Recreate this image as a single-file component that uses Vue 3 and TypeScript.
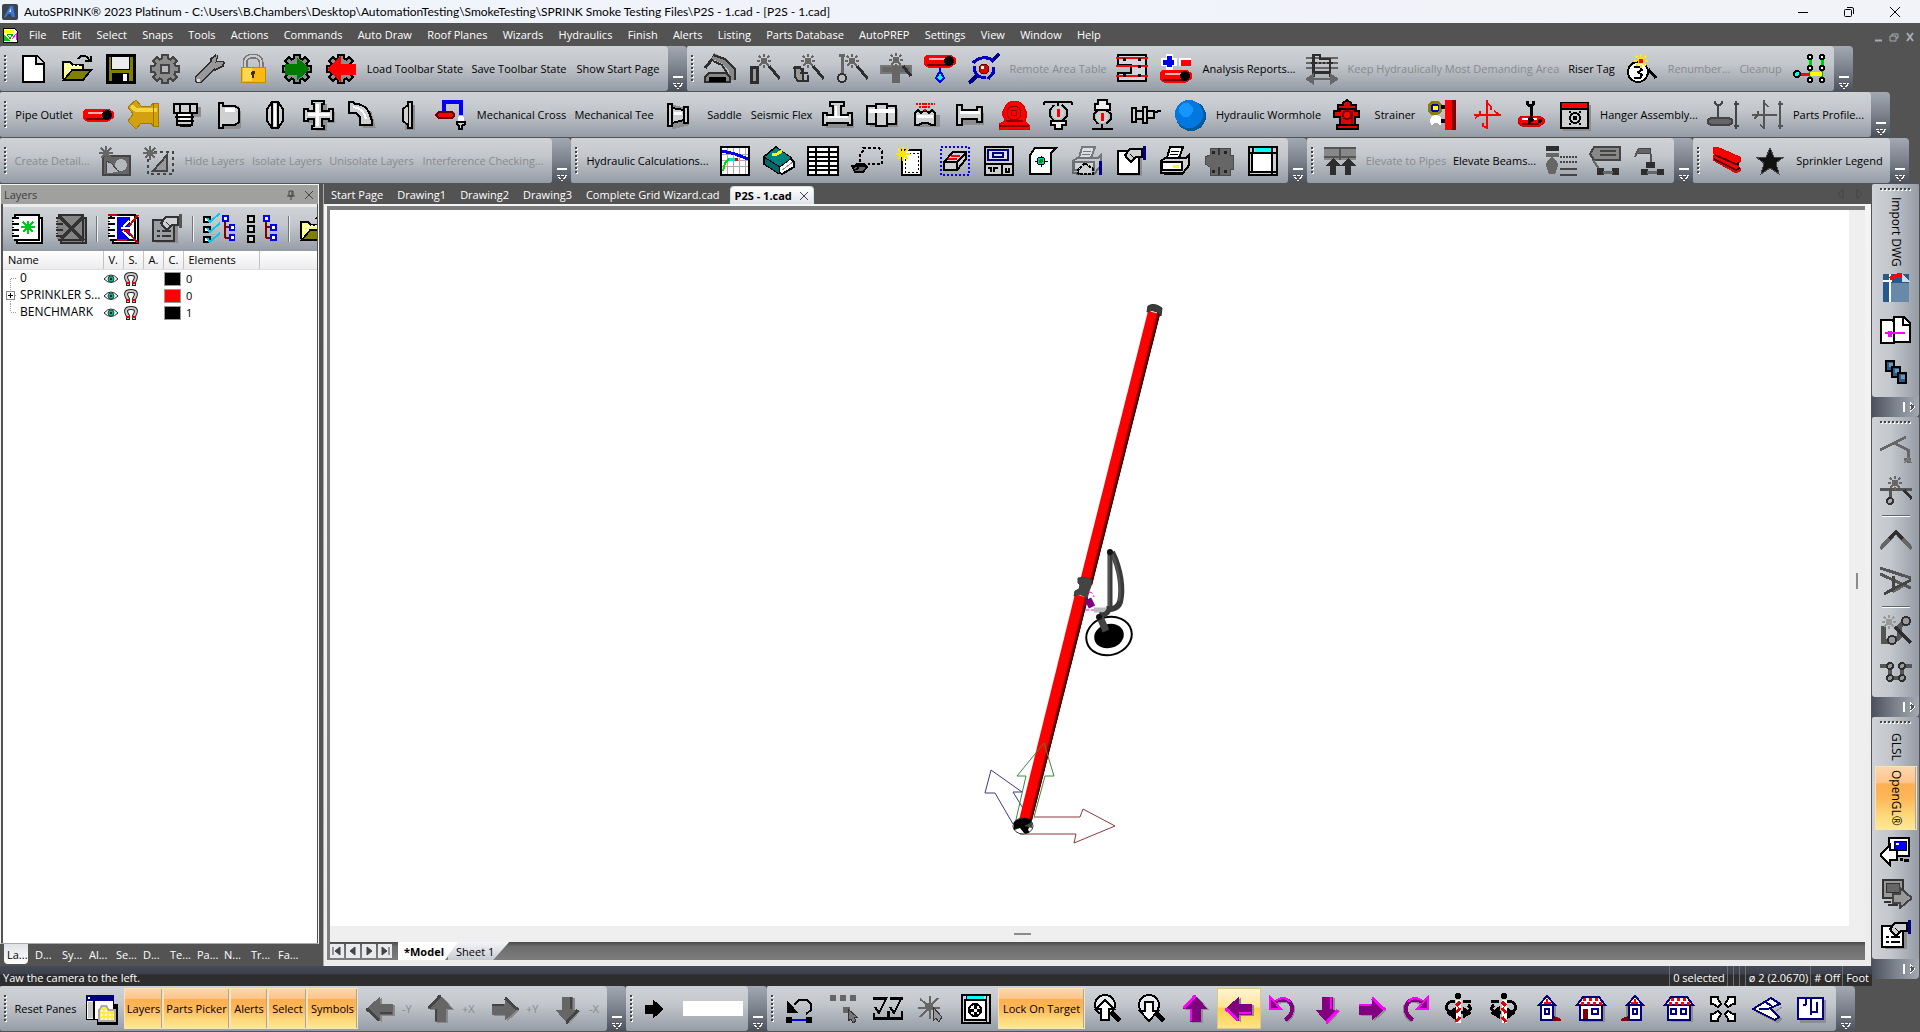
<script setup lang="ts">
interface Item {
  i?: string
  t?: string
  w?: number
  off?: boolean
  on?: boolean
  hot?: boolean
  sep?: boolean
  field?: boolean
}

const r = (x: number, y: number, w: number, h: number, f: string, s = 'none', sw = 2) =>
  `<rect x="${x}" y="${y}" width="${w}" height="${h}" fill="${f}" stroke="${s}" stroke-width="${sw}"/>`
const p = (d: string, f = 'none', s = '#000', sw = 2, extra = '') =>
  `<path d="${d}" fill="${f}" stroke="${s}" stroke-width="${sw}" ${extra}/>`
const c = (x: number, y: number, rad: number, f: string, s = 'none', sw = 2) =>
  `<circle cx="${x}" cy="${y}" r="${rad}" fill="${f}" stroke="${s}" stroke-width="${sw}"/>`

const K = '#000'
const G = '#666'
const D = '#2e2e2e'
const M = '#cfd0d2'
const B = '#000080'
const SH = '#8d8d8f'

const spokes = (w: number, len: number, f: string) =>
  [0, 45, 90, 135].map((a) => `<rect x="${16 - w / 2}" y="${16 - len}" width="${w}" height="${len * 2}" fill="${f}" transform="rotate(${a} 16 16)"/>`).join('')
const gear = (edge: string) => spokes(8, 15, edge) + c(16, 16, 12, edge) + spokes(4, 13, '#8c8c8c') + c(16, 16, 10, '#8c8c8c')
const spark = (x: number, y: number, f: string) =>
  p(`M${x} ${y - 7}v3M${x} ${y + 4}v3M${x - 7} ${y}h3M${x + 4} ${y}h3M${x - 5} ${y - 5}l2 2M${x + 3} ${y + 3}l2 2M${x + 5} ${y - 5}l-2 2M${x - 3} ${y + 3}l-2 2`, 'none', f, 2) + r(x - 3, y - 3, 6, 6, f)
const flare = (x: number, y: number, f: string) =>
  p(`M${x} ${y - 7}v14M${x - 7} ${y}h14M${x - 5} ${y - 5}l10 10M${x + 5} ${y - 5}l-10 10`, 'none', f, 2)
const wand = (x: number) => spark(x, 8, G) + p(`M${x + 5} 13l11 13`, 'none', D, 3)
const arrowUp = 'M16 3L27 15H21V28H11V15H5z'
const arrow = (deg: number, f: string, s: string, sh = SH) =>
  `<g transform="translate(2 1) rotate(${deg} 16 16)">${p(arrowUp, sh, sh, 1)}</g>` +
  `<g transform="rotate(${deg} 16 16)">${p(arrowUp, f, f, 1)}${p('M5 15L16 3L17 3', 'none', s, 3)}${p('M12 16V28', 'none', s, 2)}</g>`
const hook = (flip: boolean) =>
  `<g transform="${flip ? 'translate(32 0) scale(-1 1)' : ''}">` +
  p('M9 12C14 5 27 7 26 17C26 22 24 25 19 28', 'none', SH, 4) +
  p('M7 11C12 4 25 5 25 16C25 21 23 24 18 27', 'none', '#800080', 4) +
  p('M9 8C13 4 20 4 23 9', 'none', '#f0f', 2) +
  p('M3 4V16H14z', '#800080', '#f0f', 2) + '</g>'
const lens = (up: boolean) =>
  c(14, 12, 10, '#e8eaee', K, 2) + p('M21 20l8 8', 'none', K, 5) +
  (up ? p('M14 7L23 16H18V27H10V16H5z', '#fff') : p('M14 28L23 18H18V9H10V18H5z', '#fff'))
const yaw = (flip: boolean) =>
  `<g transform="${flip ? 'translate(32 0) scale(-1 1)' : ''}">` +
  c(15, 3, 3, K) + p('M15 7V30', 'none', '#fff', 5) + p('M13 13l4-4M13 20l4-5M13 29l4-5', 'none', '#e00000', 3) +
  p('M12 8H9C2 11 2 16 7 20M20 8H28M18 20C28 20 29 15 25 12', 'none', K, 3) + p('M12 15V26L4 20zM20 14V25L28 20z', K, K, 1) + '</g>'
const tower = (flip: boolean) =>
  `<g transform="${flip ? 'translate(32 0) scale(-1 1)' : ''}">` + r(12, 13, 13, 15, SH) +
  r(10, 12, 12, 15, '#fff', B) + p('M8 12L16 3L24 12z', '#fff', B) + p('M16 6v5M13 10h7', 'none', 'red', 2) +
  r(14, 16, 4, 5, '#fff', B) + p('M22 27h8l-7-3', '#800000', '#800000', 2) + '</g>'
const house = (door: boolean) =>
  r(8, 13, 22, 16, SH) + r(5, 12, 22, 15, '#fff', B) + p('M2 12L8 4H24L30 12z', '#fff', B) +
  p('M8 6H25M6 10H27', 'none', 'red', 3, 'stroke-dasharray="3 3"') +
  (door ? r(8, 16, 5, 10, '#800000') + r(17, 16, 6, 5, '#fff', B) : r(8, 16, 5, 5, '#fff', B) + r(18, 16, 5, 5, '#fff', B))
const book = (off: boolean) => {
  const k = off ? D : K
  const f = off ? '#848484' : '#fff'
  return r(6, 5, 25, 25, f, k) + r(4, 2, 24, 25, f, k) + r(2, 4, 4, 22, f) + p('M1 5h7M1 11h7M1 17h7M1 23h7', 'none', k, 2) + p('M2 8v1M2 14v1M2 20v1', 'none', k, 2)
}
const tree = (x: number) =>
  p(`M${x} 6v19M${x} 14h8M${x} 25h8`, 'none', '#800000', 2) + r(x - 2, 3, 5, 5, '#fff', '#00f') + r(x + 5, 12, 5, 5, '#fff', '#00f') + r(x + 5, 22, 5, 5, '#fff', '#00f')
const printer = p('M11 2H24L20 13H8z', '#fff') + p('M12 6h8M11 9h8', 'none', K, 1) + p('M2 16L6 13H27L30 10V20L24 28H2z', M) +
  r(3, 17, 20, 8, '#fff', K) + r(14, 20, 6, 3, '#ff0') + p('M5 29h18l6-7', 'none', K, 2)
const hand = (k: string, cuff: string) => p('M10 10L15 4H27V12H21L16 17L12 13z', M, k, 2) + p('M12 12l4 4M15 9l4 4', 'none', k, 1) + r(28, 1, 3, 14, cuff)
const pageHand = (k: string, f: string, cuff: string) => r(5, 8, 22, 22, SH) + r(2, 7, 21, 21, f, k) + p('M6 18h3M11 18h9M6 23h3M11 23h9', 'none', k, 2) + hand(k, cuff)
const pipe = (x: number, y: number, w: number) =>
  p(`M${x + 4} ${y}H${x + w - 5}L${x + w} ${y + 3}V${y + 9}L${x + w - 5} ${y + 12}H${x + 4}L${x} ${y + 9}V${y + 3}z`, 'red', 'red', 1) +
  p(`M${x + 3} ${y + 10}H${x + w - 6}`, 'none', '#700000', 2) + p(`M${x + 5} ${y + 4}H${x + w - 10}`, 'none', '#ffb0b0', 2) + c(x + w - 6, y + 6, 5, K)
const gantry = p('M0 5h32M0 10h32M0 15h32', 'none', G, 2)

const icons: Record<string, string> = {
  new: p('M6 3H20L27 10V29H6z', '#fff') + p('M19 3V11H27', '#ddd'),
  open: p('M2 26V9H9L12 12H22V16', '#ffff80') + p('M3 27L11 17H30L22 27z', '#808000') + p('M17 6C20 1 26 2 28 7', 'none', K, 2) + p('M24 8h6v-5', 'none', K, 2) + p('M4 13h16M4 17h8', 'none', '#fff', 2, 'stroke-dasharray="2 2"'),
  save: r(2, 2, 27, 27, '#808000', K, 3) + r(6, 3, 18, 13, '#e9ebee', K, 1) + r(7, 20, 17, 9, K) + r(18, 21, 4, 7, '#fff'),
  gear: gear('#444') + r(12, 12, 8, 8, '#b5b7ba', '#444'),
  wrench: p('M6 26L19 13', 'none', D, 9, 'stroke-linecap="round"') + p('M23 2L18 6V13L22 17L30 13L31 9', '#999', D, 2) + p('M6 26L21 11', 'none', '#999', 6, 'stroke-linecap="round"') + p('M25 2L23 9L31 8', '#c3c7cc', D, 1) + r(4, 26, 3, 3, '#ddd'),
  lock: p('M8 15V9C8 1 24 1 24 9V15', 'none', '#777', 5) + p('M8 15V9C8 1 24 1 24 9V15', 'none', '#ccc', 2) + r(4, 14, 24, 15, '#fdb913', '#c68a00', 1) + r(6, 15, 9, 13, '#ffd84d') + c(16, 20, 2, '#3c2c00') + r(15, 20, 2, 5, '#3c2c00'),
  gearGo: gear(K) + p('M4 11H16V5L28 16L16 27V21H4z', '#007a00', '#007a00', 1),
  gearBack: gear(K) + p('M30 11H15V4L3 16L15 28V21H30z', 'red', 'red', 1),
  arch: p('M1 15L10 4', 'none', D, 3) + p('M9 3L20 8L28 16V27', 'none', '#888', 6) + p('M9 2L21 6L31 16V27', 'none', D, 2) + p('M9 8L18 12L23 20', 'none', D, 2) + p('M1 29V24L5 20H22L26 24V29z', '#888', D) + r(5, 24, 17, 5, K),
  wandPipe: wand(16) + r(3, 14, 6, 15, '#999', D, 3),
  wandBox: wand(16) + p('M3 14h5l3 6v8H6L3 24z', '#999', D, 2) + p('M1 15h8M11 15v6M8 20h8M16 22v6H8', 'none', D, 2),
  wandDrop: wand(16) + p('M3 2h6M6 2V20', 'none', G, 3) + c(6, 25, 4, '#bbb', D),
  wandTee: p('M1 13H31V20H1z', G, '#777', 2) + r(12, 13, 8, 17, G) + spark(16, 7, G) + p('M23 13l8 10', 'none', D, 3),
  pipeDrop: pipe(0, 2, 31) + p('M16 14V20', 'none', '#00f', 2) + p('M16 18L20 25L16 29L12 25z', '#0ff', '#00f'),
  swirl: p('M1 30L10 22M23 9L31 1', 'none', B, 4) + p('M5 10C10 4 20 3 26 8M7 13C5 20 11 26 18 24M25 14V20L20 26', 'none', '#0000c8', 3) + c(16, 16, 5, '#e00000', '#700000', 1) + r(13, 13, 3, 3, '#fff'),
  listing: p('M2 2h28v26H2V20H15V12H2z', '#d2d5d9', K, 2) + p('M0 5h32M0 13h32M0 23h32', 'none', 'red', 2) + p('M8 5v3M23 5v3M8 21v3M23 21v3M23 12v3', 'none', K, 3),
  plusMinus: p('M6 1h6v4h4v7h-4v4H6v-4H1V5h5z', '#fff', '#fff', 1) + p('M3 9h11M9 3v11', 'none', '#0000e8', 5) + r(19, 5, 12, 8, '#fff') + r(21, 7, 10, 6, 'red') + pipe(0, 17, 31),
  gantry: gantry + p('M7 15V2h7v4h10v18', 'none', D, 2) + p('M7 2v22M7 19h17', 'none', D, 3) + p('M5 10h22', 'none', D, 2, 'stroke-dasharray="2 2"') + p('M1 26l6-4v8zM31 26l-6-4v8zM6 26h20', G, G, 2),
  tag: c(12, 19, 10, '#fff', K, 2) + p('M8 14h6l2 3-4 2 4 3-2 3H8', 'none', K, 2) + p('M22 16l8 9', 'none', K, 3) + spark(15, 8, '#ffee00') + r(13, 6, 4, 4, 'red'),
  grid4: p('M17 5v11M29 5v11', 'none', '#00d000', 3) + p('M17 17v10M29 17v10', 'none', '#0a0', 2) + p('M4 21h13', 'none', 'red', 3) + p('M17 21h12', 'none', '#ff0', 4) + c(4, 21, 3, '#0ff', K) + [4, 15, 27].map((y) => c(17, y, 2, '#fff', K) + c(29, y, 2, '#fff', K)).join(''),
  pipe: pipe(0, 10, 30),
  wye: p('M1 8L9 1L14 7H24L26 4H31V27H26L24 24H14L9 30L1 22L6 15z', '#d3a10f', '#a57a00', 1) + p('M4 7L9 11H30', 'none', '#f5d442', 4) + p('M26 5V27', 'none', '#9a7400', 1),
  threaded: r(6, 8, 24, 10, SH) + r(3, 5, 23, 9, M, K) + p('M9 5v9M19 5v9', 'none', K, 2) + r(6, 14, 15, 12, M, K) + p('M4 18h19M5 22h18M9 27h11', 'none', K, 2) + p('M7 16h12M9 20h10', 'none', '#fff', 2),
  dcap: p('M9 7H23Q28 16 25 29H8', SH, SH, 1) + p('M4 3V29M4 4H8V7H20L24 10V23L20 26H8V29H4z', M, K, 2) + p('M10 11h10', 'none', '#fff', 4),
  oval: p('M13 3H19L24 10V22L19 29H13L8 22V10z', M, K, 2) + p('M13 3V29M19 3V29', 'none', K, 2) + p('M16 5V27', 'none', '#fff', 2),
  cross: p('M13 5h10v8h9v10h-9v8H13v-8H5V13h8z', SH, SH, 1) + p('M9 2H21V5H19V12H26V10H30V22H26V20H19V27H21V30H9V27H11V20H5V22H1V10H5V12H11V5H9z', M, K, 2) + p('M14 5V27M5 15H27', 'none', '#fff', 3),
  elbow: p('M5 7L24 13L28 28H16', SH, SH, 1) + p('M2 3V14L9 14L13 18V26H25V22L22 13Q18 5 8 5L6 3z', M, K, 2) + p('M6 8Q17 9 19 20', 'none', '#fff', 2),
  flange: r(14, 6, 10, 25, SH) + r(17, 3, 4, 26, M, K) + p('M17 6L12 10V22L17 26', M, K, 2),
  riser: p('M9 14V3H26V16', 'none', '#00f', 4) + p('M1 16L4 13H17L19 15V17L17 19H4z', 'red', '#600', 2) + c(26, 20, 3, '#fff') + p('M22 23h8v2l-3 2v3h-3v-3l-2-2z', M, K, 2),
  reducer: p('M8 6L24 10V26L8 30', SH, SH, 1) + p('M4 5H8V27H4zM8 9L20 11V21L8 24M20 8H24V24H20z', M, K, 2) + p('M10 14h8', 'none', '#fff', 3),
  tee: r(4, 20, 28, 9, SH) + p('M1 14H5V16H11V7H8V3H22V7H19V16H26V14H30V26H26V24H5V26H1z', M, K, 2) + p('M14 7V18M6 18H26', 'none', '#fff', 2),
  coupling: r(4, 10, 28, 18, SH) + r(1, 7, 10, 18, M, K) + r(20, 7, 10, 18, M, K) + r(10, 5, 11, 22, M, K) + p('M3 12h26', 'none', '#fff', 4),
  sleeve: r(7, 16, 23, 12, SH) + p('M5 14L8 11L11 14L15 11L19 14L22 11L25 14V26H21L18 24H12L9 26H5z', M, K, 2) + p('M7 17h16', 'none', '#fff', 3) + p('M6 5h19M9 8h12M15 4v8', 'none', 'red', 2, 'stroke-dasharray="2 1"'),
  nipple: r(6, 14, 24, 12, SH) + p('M3 6H8V11H23V8H28V23H23V20H8V26H3z', M, K, 2) + p('M6 13h20', 'none', '#fff', 3),
  pump: p('M4 14L8 6L13 2H20L26 7L29 15L27 22L31 26V30H1V25L7 22z', '#f00', '#d00', 1) + c(16, 14, 7, '#ff0000', '#8a0000', 1) + c(16, 14, 3, 'red', '#8a0000', 1) + p('M1 27H31M8 22h17', 'none', '#8a0000', 2),
  upright: p('M2 3H30M2 3V6M30 3V6M16 3V7', 'none', K, 2) + p('M12 6L8 11V17L12 22M20 6L25 11V17L20 22', 'none', K, 2) + c(16, 14, 6, M) + r(15, 10, 3, 8, 'red') + p('M9 22H24V26H20V30H13V26H9z', '#eee', K, 2),
  pendent: p('M12 1H21V5H24V11H9V5H12z', '#eee', K, 2) + p('M12 11L8 15V20L12 25M20 11L25 15V20L20 25', 'none', K, 2) + c(16, 18, 6, M) + r(15, 14, 3, 8, 'red') + p('M16 25V29M6 30H27', 'none', K, 2),
  sidewall: p('M2 9H6V23H2zM6 12H13V20H6zM13 8H17V24H13zM17 12H24V19H17zM24 13L31 12', M, K, 2),
  ball: c(17, 17, 15, '#005a9e') + c(15, 15, 14, '#0078e0') + c(12, 11, 7, '#1595ff'),
  hydrant: p('M12 4L16 1L20 4V6H25V10H24V12H28V18H24V26H27V30H6V26H9V18H3V12H9V10H7V6H12z', '#e60000', K, 2) + p('M8 10h17M10 26h13', 'none', K, 2) + c(16, 16, 4, 'red', '#600') + p('M21 12V25', 'none', '#800', 2),
  wallHead: r(18, 1, 8, 30, 'red') + r(25, 1, 4, 30, '#800000') + c(8, 9, 6, '#00c', '#8a8000', 3) + r(6, 7, 5, 4, '#ff0') + c(9, 22, 6, '#fff') + c(9, 28, 4, '#aaa') + p('M14 8h4M14 22h4', 'none', K, 4),
  axis: p('M16 1V30M3 16H30M16 3L20 8V11M4 19L9 16V12M16 29L12 27V24M23 12L29 16', 'none', 'red', 1.5),
  hanger: p('M12 2C12 8 19 8 19 2M16 7V18', 'none', K, 3) + p('M3 20L7 17H25L29 20V24L25 27H7L3 24z', 'red', '#c00', 1) + p('M7 20H22', 'none', '#fff', 2) + p('M7 25H24', 'none', '#700000', 2) + p('M16 17L13 21V25L19 21z', K, K, 1) + c(25, 22, 2, K),
  box: r(4, 6, 29, 26, SH) + r(2, 4, 27, 25, M, K) + r(3, 4, 25, 5, 'red') + p('M2 10h27', 'none', K, 2) + c(16, 19, 5, 'none', K) + r(14, 17, 4, 4, K) + p('M10 13h2M20 13h2M10 25h2M20 25h2', 'none', K, 2),
  hangerRod: p('M8 2C8 8 15 8 15 2M11 7V20M29 2V30M27 5h5M27 27h5', 'none', '#444', 2) + p('M1 21L4 19H22L25 21V24L22 26H4L1 24z', G, '#444', 2),
  axisRod: p('M13 1V30M1 16H26M13 3L17 8M3 20L7 16V12M13 29L9 26M29 2V30M27 5h5M27 27h5', 'none', '#555', 1.5),
  detail: p('M4 11H31V30H4z', G, '#444', 2) + c(22, 20, 6, '#b4b8be') + p('M7 28V16L12 18L20 27', '#b4b8be', '#444', 1) + flare(7, 8, G),
  detailSel: r(5, 7, 25, 22, 'none', '#444', 2).replace('/>', ' stroke-dasharray="3 3"/>') + p('M10 26L24 10V26z', '#999', '#444', 2) + flare(7, 8, G),
  graph: r(2, 2, 28, 28, '#fff', K) + p('M8 3V29M14 3V29M20 3V29M26 3V29M3 9H29M3 15H29M3 21H29', 'none', '#aaa', 1) + p('M3 6L16 9L29 14', 'none', '#00f', 3) + p('M4 26L6 18L10 14', 'none', '#0d0', 2) + p('M10 14H16', 'none', '#0dd', 3) + p('M16 14h3', 'none', 'red', 3),
  book: p('M1 12L13 2L31 17V22L19 29L1 19z', '#fff', K, 2) + p('M1 12L13 2L29 13L17 22z', '#008080', K, 1) + p('M1 12V19L16 29L17 22z', '#006868', K, 1) + p('M9 9h5l5-3', 'none', '#ff0', 3) + p('M19 25l11-8', 'none', SH, 1),
  table: r(1, 2, 30, 28, '#fff', K) + p('M1 7H31M1 12H31M1 16H31M1 21H31M1 25H31M9 2V30M22 2V30', 'none', K, 2),
  lasso: p('M9 17V9L12 6V3H28L31 6V19H17', 'none', K, 2, 'stroke-dasharray="3 2"') + p('M2 23L6 19H13L16 22L12 27H4z', G, K, 2) + p('M0 21h14M5 25l5-6', 'none', K, 2),
  note: r(7, 5, 19, 25, '#fff', K) + r(10, 8, 13, 19, 'none', K, 1).replace('/>', ' stroke-dasharray="2 2"/>') + flare(8, 9, '#ffe800') + r(5, 6, 6, 6, '#ffe800'),
  eraser: r(2, 2, 28, 28, 'none', '#00f', 2).replace('/>', ' stroke-dasharray="2 2"/>') + p('M5 17L14 7H27V14L18 25H5z', M, K, 2) + p('M5 17H18L27 8M18 17V25', 'none', K, 2) + p('M12 11h9M9 14h9', 'none', 'red', 2),
  monitor: r(2, 2, 28, 28, M, K, 2) + r(5, 5, 20, 10, '#dfe1e4', B, 2) + r(10, 8, 10, 4, 'none', B) + p('M2 19H30M19 19V30', 'none', K, 2) + p('M5 23h3v4M11 27v-4h4M23 23v4h3v-4', 'none', K, 2),
  target: p('M8 3H29L24 8V29H3V10z', '#fff', K, 2) + p('M8 16h13M14 11v11', 'none', K, 1) + c(14, 16, 4, '#0cc', K, 1) + c(14, 16, 2, '#080'),
  printHand: `<g opacity=".4">${printer}</g>` + p('M6 26L14 18L22 24V29H8z', M, K, 2, 'stroke-dasharray="3 1"') + r(28, 16, 3, 14, B),
  pageHand: r(5, 8, 22, 23, SH) + r(3, 6, 21, 23, '#fff', K) + hand(K, B),
  printer,
  block: p('M7 3H27V10H30V24H27V30H7V22L2 19V12L7 10z', G, '#4a4a4a', 1) + p('M16 3V10M16 22V30', 'none', '#333', 2) + p('M9 7h3M21 7h3M9 26h3M21 26h3', 'none', '#222', 3),
  window: r(2, 2, 28, 28, M, K) + r(8, 3, 16, 4, '#0ff') + r(5, 8, 20, 19, '#fff', K) + p('M2 8H30M6 2V8M25 2V8M2 27H30M25 8V30', 'none', K, 2),
  elevate: r(0, 2, 32, 13, '#888') + p('M0 3H32M0 12H32M16 2V15', 'none', '#555', 2) + p('M9 30V20M24 30V20', 'none', D, 6) + p('M9 13L17 21H1zM24 13L32 21H16z', D, D, 0),
  beamA: r(1, 1, 13, 5, D) + r(1, 8, 13, 4, G) + p('M7 12l6 7-3 9H4L1 19z', G, G, 1) + p('M15 12H32M15 17H32', 'none', '#444', 2, 'stroke-dasharray="2 1"') + r(15, 23, 17, 2, '#444') + r(15, 29, 17, 2, '#444'),
  beamB: p('M5 2H31V15H5L1 9z', '#888', '#444', 2) + p('M11 6H27M11 10H27', 'none', '#444', 2) + p('M4 15L10 24', 'none', G, 2) + r(8, 23, 7, 7, D) + r(23, 23, 7, 7, D) + r(14, 26, 10, 3, G),
  beamC: p('M6 3H17V8H4z', G, '#444', 1) + p('M2 12L6 3M18 9V20', 'none', '#555', 2) + p('M13 17h8v5h-8z', D, D, 1) + r(8, 24, 7, 6, D) + r(24, 24, 7, 6, D) + r(14, 26, 10, 3, G),
  beam: p('M3 3L7 2L30 12V17L28 18V22L30 23V26L26 28L3 15V11L5 10L3 8z', 'red', '#d00', 1) + p('M5 10L28 20M4 14L26 25', 'none', '#500000', 2) + p('M28 17v3M26 25l4-2', 'none', K, 2),
  star: p('M16 3L20 12H30L22 18L25 29L16 23L7 29L10 18L2 12H12z', '#111', '#444', 1),
  layout: p('M12 12H32V31H12z', K) + r(0, 2, 27, 24, '#fff', K, 1) + r(0, 2, 28, 6, B) + r(2, 4, 2, 2, '#fff') + p('M8 8V26', 'none', K, 2) + r(2, 9, 5, 16, '#c4c6c9') + p('M13 28V17L16 13H20L23 17H29V28z', '#ffee33', '#aaa', 2) + p('M15 18h8M15 22h13M15 26h13', 'none', '#fff', 2, 'stroke-dasharray="2 2"'),
  left: arrow(-90, G, '#444', '#888'),
  up: arrow(0, G, '#444', '#888'),
  right: arrow(90, G, '#444', '#888'),
  down: arrow(180, G, '#444', '#888'),
  go: p('M7 12H15V7L25 16L15 25V20H7z', K, K, 1),
  undo: p('M10 12L15 7H23L27 11V17L22 21', 'none', K, 2) + p('M3 8V19H13z', K, K, 1) + r(2, 24, 6, 6, K) + r(22, 24, 6, 6, K) + r(8, 26, 14, 2, '#00f'),
  pick: r(2, 2, 6, 6, G) + r(12, 2, 6, 6, G) + r(22, 2, 6, 6, G) + r(15, 14, 7, 6, G) + p('M20 16V28L23 26L25 30L28 28L26 24H29z', '#777', '#333', 1),
  checks: p('M1 5H14M18 5H31M1 25H31', 'none', K, 3) + p('M3 14L7 20L15 4M18 14L22 20L30 4', 'none', K, 2) + p('M2 20v5M30 18v7', 'none', K, 2) + r(15, 18, 3, 7, K),
  burst: p('M14 3V26M2 15H24M4 6L24 22M22 5L4 24', 'none', G, 2) + c(13, 14, 4, G) + p('M17 14V28L20 25L23 29L26 24z', '#999', '#333', 1),
  camera: r(2, 2, 28, 28, M, K, 2) + r(7, 3, 17, 3, '#0ff') + r(5, 7, 21, 20, '#fff', K) + c(15, 17, 6, '#fff', K, 2) + p('M15 11V16M9 17h5M15 23V19M21 17h-4', 'none', K, 3) + p('M6 2V7M26 2V30', 'none', K, 1),
  zoomUp: lens(true),
  zoomDown: lens(false),
  pUp: arrow(0, '#800080', '#f0f'),
  pLeft: arrow(-90, '#800080', '#f0f'),
  pDown: arrow(180, '#800080', '#f0f'),
  pRight: arrow(90, '#800080', '#f0f'),
  pCcw: hook(false),
  pCw: hook(true),
  yawL: yaw(false),
  yawR: yaw(true),
  tower: tower(false),
  houseDoor: house(true),
  towerB: tower(true),
  house: house(false),
  expand: [0, 90, 180, 270].map((a) => `<g transform="rotate(${a} 16 16)">${p('M4 4H11V6L14 11L11 14L6 11H4z', '#fff', K, 2)}</g>`).join(''),
  iso: p('M5 18L12 12L22 20L31 26L27 30L5 19M22 20L31 14', SH, SH, 1) + p('M2 16L20 5L29 11L19 15L28 24L24 27z', '#fff', B, 2) + p('M8 16h10M14 9l7 4', 'none', B, 2),
  plan: r(5, 7, 26, 23, SH) + r(3, 5, 25, 21, '#fff', B) + p('M11 5V12M11 12H8M16 5V19M17 19H22V9M16 19v3', 'none', B, 2),
  layerNew: book(false) + p('M17 8v13M10 14h14M12 9l10 10M22 9L12 19', 'none', '#00c81e', 2),
  layerDel: book(true) + p('M5 4L29 28M28 4L6 26', 'none', '#333', 3),
  layerCross: book(false) + r(10, 4, 13, 22, '#0000f0') + p('M14 15h9M22 8l-6 6M16 18l8 8', 'none', '#fff', 2) + p('M1 2H10M31 2L22 13M17 18H22M21 19L31 30M10 27H20', 'none', '#d00000', 2),
  props: pageHand('#333', '#9b9ea3', '#555'),
  checkTree: [4, 14, 24].map((y) => r(1, y, 6, 5, '#fff', K) + p(`M4 ${y + 1}l3 4L17 ${y - 4}`, 'none', '#0ce', 2)).join('') + tree(22),
  listTree: [3, 13, 23].map((y) => r(1, y, 6, 6, M, K)).join('') + tree(19),
  dwg: r(3, 1, 26, 28, '#245a8c') + r(10, 10, 19, 19, '#6889a8') + p('M22 1L29 8H22z', '#d0dbe6', '#d0dbe6', 1) + p('M10 1V29M3 8H12', 'none', '#fff', 2) + p('M10 6L18 2L22 2', 'none', 'red', 4),
  copyPage: p('M1 5H12L14 7V28H1z', '#fff', K, 2) + p('M14 2H24L30 8V27H14z', '#fff', K, 2) + p('M23 3V10H30', 'none', K, 2) + p('M5 18H25', 'none', '#f0f', 2) + r(8, 16, 4, 6, '#f0f'),
  chain: [[6, 4], [12, 10], [18, 16]].map(([x, y]) => r(x, y, 8, 10, '#2b5c8a', K, 2) + r(x + 3, y + 2, 4, 4, '#6f95b8')).join(''),
  branch: p('M0 17L26 4M14 10L28 17V30M24 26h7', 'none', G, 3) + p('M25 30L28 25L31 30', 'none', '#777', 2),
  addHead: p('M0 14H32M10 14V24', 'none', '#555', 3) + spark(15, 8, G) + p('M24 15l8 9', 'none', D, 3) + c(10, 26, 3, '#aaa', '#333'),
  chevron: p('M0 25L16 8L32 25', 'none', G, 4) + p('M9 15L16 8L23 15', 'none', D, 4),
  frame: p('M0 2L31 12M0 8L31 22', 'none', '#555', 3) + p('M13 10V26M31 14L4 28', 'none', '#444', 3) + p('M13 26L24 20', 'none', G, 2),
  wandChain: p('M3 11V26H14L19 22V12L25 7', 'none', '#555', 5) + spark(9, 7, '#999') + c(26, 6, 4, '#999', D) + c(12, 25, 4, '#999', D) + p('M15 12L31 28', 'none', D, 4),
  nodes: p('M0 9H10V21H22V9H32', 'none', '#555', 4) + [[10, 9], [22, 9], [10, 21], [22, 21]].map(([x, y]) => c(x, y, 3, '#999', D)).join(''),
  pcOut: r(9, 3, 20, 18, '#fff', K, 2) + r(14, 6, 12, 9, '#00f', K, 1) + r(16, 8, 3, 2, '#fff') + p('M24 25h5M20 24h3', 'none', K, 3) + p('M0 20L10 10V15H17V25H10V30z', '#fff', K, 2),
  pcIn: r(3, 3, 20, 18, '#999', '#333', 2) + r(6, 6, 13, 9, G, '#333', 1) + p('M4 25h7M8 28h10', 'none', '#333', 2) + p('M32 21L20 31V26H13V17H20V11z', '#999', '#444', 2),
  propsOn: pageHand(K, '#fff', B),
}

const ic = (...names: string[]): Item[] => names.map((i) => ({ i }))

const topRows: Item[][][] = [
  [
    [...ic('new', 'open', 'save', 'gear', 'wrench', 'lock', 'gearGo', 'gearBack'), { t: 'Load Toolbar State', w: 104 }, { t: 'Save Toolbar State', w: 104 }, { t: 'Show Start Page', w: 94 }],
    [...ic('arch', 'wandPipe', 'wandBox', 'wandDrop', 'wandTee', 'pipeDrop', 'swirl'), { t: 'Remote Area Table', w: 104, off: true }, ...ic('listing', 'plusMinus'), { t: 'Analysis Reports...', w: 102 }, { i: 'gantry' }, { t: 'Keep Hydraulically Most Demanding Area', w: 219, off: true }, { t: 'Riser Tag', w: 57 }, { i: 'tag' }, { t: 'Renumber...', w: 70, off: true }, { t: 'Cleanup', w: 53, off: true }, { i: 'grid4' }],
  ],
  [
    [{ t: 'Pipe Outlet', w: 66 }, ...ic('pipe', 'wye', 'threaded', 'dcap', 'oval', 'cross', 'elbow', 'flange', 'riser'), { t: 'Mechanical Cross', w: 97 }, { t: 'Mechanical Tee', w: 88 }, { i: 'reducer' }, { t: 'Saddle', w: 45 }, { t: 'Seismic Flex', w: 69 }, ...ic('tee', 'coupling', 'sleeve', 'nipple', 'pump', 'upright', 'pendent', 'sidewall', 'ball'), { t: 'Hydraulic Wormhole', w: 113 }, { i: 'hydrant' }, { t: 'Strainer', w: 52 }, ...ic('wallHead', 'axis', 'hanger', 'box'), { t: 'Hanger Assembly...', w: 104 }, ...ic('hangerRod', 'axisRod'), { t: 'Parts Profile...', w: 79 }],
  ],
  [
    [{ t: 'Create Detail...', w: 82, off: true }, ...ic('detail', 'detailSel'), { t: 'Hide Layers', w: 67, off: true }, { t: 'Isolate Layers', w: 78, off: true }, { t: 'Unisolate Layers', w: 91, off: true }, { t: 'Interference Checking...', w: 132, off: true }],
    [{ t: 'Hydraulic Calculations...', w: 131 }, ...ic('graph', 'book', 'table', 'lasso', 'note', 'eraser', 'monitor', 'target', 'printHand', 'pageHand', 'printer', 'block', 'window')],
    [{ i: 'elevate' }, { t: 'Elevate to Pipes', w: 88, off: true }, { t: 'Elevate Beams...', w: 89 }, ...ic('beamA', 'beamB', 'beamC')],
    [...ic('beam', 'star'), { t: 'Sprinkler Legend', w: 95 }],
  ],
]

const bottomBars: Item[][] = [
  [{ t: 'Reset Panes', w: 69 }, { i: 'layout' }, { t: 'Layers', w: 39, on: true }, { t: 'Parts Picker', w: 67, on: true }, { t: 'Alerts', w: 38, on: true }, { t: 'Select', w: 39, on: true }, { t: 'Symbols', w: 51, on: true }, { i: 'left', t: '-Y', w: 60, off: true }, { i: 'up', t: '+X', w: 64, off: true }, { i: 'right', t: '+Y', w: 63, off: true }, { i: 'down', t: '-X', w: 59, off: true }],
  [{ i: 'go' }, { field: true }],
  [...ic('undo', 'pick', 'checks', 'burst', 'camera'), { t: 'Lock On Target', w: 87, on: true }, ...ic('zoomUp', 'zoomDown', 'pUp'), { i: 'pLeft', hot: true }, ...ic('pCcw', 'pDown', 'pRight', 'pCw', 'yawL', 'yawR', 'tower', 'houseDoor', 'towerB', 'house', 'expand', 'iso', 'plan')],
]

const dockBars: Item[][] = [
  [{ t: 'Import DWG', w: 73 }, ...ic('dwg', 'copyPage', 'chain')],
  [...ic('branch', 'addHead'), { sep: true }, ...ic('chevron', 'frame'), { sep: true }, ...ic('wandChain', 'nodes')],
  [{ t: 'GLSL', w: 38 }, { t: 'OpenGL®', w: 64, on: true }, ...ic('pcOut', 'pcIn', 'propsOn')],
]

const paneBar: Item[] = [...ic('layerNew', 'layerDel'), { sep: true }, ...ic('layerCross', 'props'), { sep: true }, ...ic('checkTree', 'listTree'), { sep: true }, { i: 'open' }]

const menus = ['File', 'Edit', 'Select', 'Snaps', 'Tools', 'Actions', 'Commands', 'Auto Draw', 'Roof Planes', 'Wizards', 'Hydraulics', 'Finish', 'Alerts', 'Listing', 'Parts Database', 'AutoPREP', 'Settings', 'View', 'Window', 'Help']
const docTabs = ['Start Page', 'Drawing1', 'Drawing2', 'Drawing3', 'Complete Grid Wizard.cad']
const paneTabs = ['La...', 'D...', 'Sy...', 'Al...', 'Se...', 'D...', 'Te...', 'Pa...', 'N...', 'Tr...', 'Fa...']
const layers = [
  { name: '0', color: '#000', n: 0, plus: false },
  { name: 'SPRINKLER S...', color: '#f00', n: 0, plus: true },
  { name: 'BENCHMARK', color: '#000', n: 1, plus: false },
]
const navGlyphs = ['M3 3V11M10 3V11L5 7z', 'M9 3V11L4 7z', 'M5 3V11L10 7z', 'M4 3V11L9 7zM11 3V11']
</script>

<template>
  <div class="app">
    <header class="title">
      <svg class="logo" viewBox="0 0 16 16"><rect width="16" height="16" rx="2" fill="#3c4450" /><path d="M2 13L8 2H11L13 13H10L9 10H6L4 13z" fill="#3c78d8" /><path d="M7 8L9 4V8z" fill="#dfe9f7" /></svg>
      <h1>AutoSPRINK® 2023 Platinum - C:\Users\B.Chambers\Desktop\AutomationTesting\SmokeTesting\SPRINK Smoke Testing Files\P2S - 1.cad - [P2S - 1.cad]</h1>
      <div class="wincontrols">
        <button aria-label="Minimize"><svg viewBox="0 0 12 12"><path d="M1 6.500H11" /></svg></button>
        <button aria-label="Restore"><svg viewBox="0 0 12 12"><rect x="1.500" y="3.500" width="7" height="7" rx="1" /><path d="M4 1.500H9Q10.500 1.500 10.500 3V8" /></svg></button>
        <button aria-label="Close"><svg viewBox="0 0 12 12"><path d="M1 1L11 11M11 1L1 11" /></svg></button>
      </div>
    </header>

    <nav class="menu">
      <svg class="docicon" viewBox="0 0 16 16" shape-rendering="crispEdges"><path d="M1 1H12L15 4V15H1z" fill="#fff" stroke="#000" /><path d="M2 4H12" stroke="#ff0" stroke-width="3" /><path d="M2 7L8 14H2z" fill="#0c0" /><path d="M5 7h6l-3 5z" fill="none" stroke="#0a0" /><path d="M10 12l4-5v6" fill="none" stroke="#f0f" /></svg>
      <div class="menus"><button v-for="m in menus" :key="m">{{ m }}</button></div>
      <div class="mdi">
        <button aria-label="Minimize drawing"><svg viewBox="0 0 10 10"><path d="M2 8.500H9" /></svg></button>
        <button aria-label="Restore drawing"><svg viewBox="0 0 10 10"><path d="M1 4H7V9H1zM3 4V2H9V6H7" class="thin" /></svg></button>
        <button aria-label="Close drawing"><svg viewBox="0 0 10 10"><path d="M2 1L8 9M8 1L2 9" /></svg></button>
      </div>
    </nav>

    <div v-for="(row, ri) in topRows" :key="ri" class="row">
      <div v-for="(bar, bi) in row" :key="bi" class="bar">
        <div class="body">
          <i class="grip"></i>
          <button v-for="(it, k) in bar" :key="k" :class="['tool', { off: it.off }]" :disabled="it.off" :aria-label="it.t || it.i" :style="it.w ? { width: it.w + 'px' } : undefined">
            <svg v-if="it.i" class="ic" viewBox="0 0 32 32" v-html="icons[it.i]"></svg>
            <span v-if="it.t">{{ it.t }}</span>
          </button>
        </div>
        <button class="more" aria-label="More buttons"><svg viewBox="0 0 12 16"><path d="M1 2H11" class="dash" /><path d="M1 8H11L6 14z" class="tri" /></svg></button>
      </div>
    </div>

    <div class="middle">
      <div class="main">
        <div class="work">
          <section class="side">
            <div class="pane">
              <div class="panehead">
                <h2>Layers</h2>
                <button aria-label="Pin"><svg viewBox="0 0 10 10"><path d="M3 1H7V6H3zM1 6H9M5 6V10M6 1V6" /></svg></button>
                <button aria-label="Close pane"><svg viewBox="0 0 10 10"><path d="M1 1L9 9M9 1L1 9" /></svg></button>
              </div>
              <div class="panebar">
                <template v-for="(it, k) in paneBar" :key="k">
                  <i v-if="it.sep" class="vsep"></i>
                  <button v-else class="tool" :aria-label="it.i"><svg class="ic" viewBox="0 0 32 32" v-html="icons[it.i!]"></svg></button>
                </template>
              </div>
              <div class="list">
                <table>
                  <colgroup><col class="cname" /><col class="cs" /><col class="cs" /><col class="cs" /><col class="cs" /><col class="cel" /><col /></colgroup>
                  <thead><tr><th>Name</th><th>V.</th><th>S.</th><th>A.</th><th>C.</th><th>Elements</th><th></th></tr></thead>
                  <tbody>
                    <tr v-for="(l, k) in layers" :key="k">
                      <td>
                        <div class="lname">
                          <svg class="twig" viewBox="0 0 16 17" shape-rendering="crispEdges">
                            <path :d="k === 0 ? 'M7.500 9V17M8 8.500H14' : k === 1 ? 'M7.500 0V17M8 8.500H14' : 'M7.500 0V8M8 8.500H14'" fill="none" stroke="#999" stroke-dasharray="1 1" />
                            <path v-if="l.plus" d="M3.500 4.500H11.500V12.500H3.500z" fill="#fff" stroke="#888" />
                            <path v-if="l.plus" d="M5 8.500H10M7.500 6V11" stroke="#000" />
                          </svg>
                          <span>{{ l.name }}</span>
                        </div>
                      </td>
                      <td><svg class="mark" viewBox="0 0 16 14"><path d="M1 7Q8 -1 15 7Q8 14 1 7z" fill="#fff" stroke="#222" /><circle cx="8" cy="7" r="3" fill="#1fa58a" stroke="#0a5a44" /><circle cx="8" cy="7" r="1" fill="#000" /></svg></td>
                      <td><svg class="mark" viewBox="0 0 16 14"><path d="M5 14V10Q0 2 8 2Q16 2 11 10V14" fill="none" stroke="#222" stroke-width="4" /><path d="M5 13V10Q0 2 8 2Q16 2 11 10V13" fill="none" stroke="#ccc" stroke-width="2" /><path d="M3 11h4M9 11h4" stroke="#d00" stroke-width="2" /></svg></td>
                      <td></td>
                      <td><i class="swatch" :style="{ background: l.color }"></i></td>
                      <td class="num">{{ l.n }}</td>
                      <td></td>
                    </tr>
                  </tbody>
                </table>
              </div>
            </div>
            <div class="panetabs">
              <button v-for="(t, k) in paneTabs" :key="k" :class="{ sel: k === 0 }">{{ t }}</button>
            </div>
          </section>

          <section class="docs">
            <div class="doctabs">
              <button v-for="t in docTabs" :key="t">{{ t }}</button>
              <div class="active">
                <b>P2S - 1.cad</b>
                <button aria-label="Close tab"><svg viewBox="0 0 10 10"><path d="M1 1L9 9M9 1L1 9" /></svg></button>
              </div>
              <svg class="scroll" viewBox="0 0 30 12"><path d="M6 1V11L1 6zM20 1V11L25 6z" /></svg>
            </div>
            <div class="frame">
              <div class="sheet">
                <div class="view">
                  <div class="canvas">
                    <svg class="drawing" viewBox="960 290 240 570">
                      <path d="M985 793L991 770L1022 792H1013L1032 823M985 793H995L1013 824" fill="none" stroke="#3a3a8c" />
                      <path d="M1034 817H1080L1083 809L1115 826L1074 843L1076 834H1020" fill="none" stroke="#8c3a3a" />
                      <path d="M1148 311L1160 314L1092 585L1080 581z" fill="#f00" />
                      <path d="M1160 314L1092 585L1089 584L1157 313z" fill="#900000" />
                      <path d="M1160 314L1092 585L1091 584L1159 313z" fill="#200000" />
                      <path d="M1075 594L1088 598L1032 820L1019 820z" fill="#f00" />
                      <path d="M1088 598L1032 820L1029 820L1085 597z" fill="#900000" />
                      <path d="M1088 598L1032 820L1031 820L1087 597z" fill="#200000" />
                      <path d="M1148 306Q1154 302 1162 308L1161 316L1157 312Q1152 309 1147 312z" fill="#3c3c3c" stroke="#2c2c2c" />
                      <path d="M1078 578Q1085 576 1092 580L1091 586L1089 591L1087 599Q1081 592 1074 596L1075 591L1079 589L1080 585L1078 583z" fill="#444" stroke="#3a3a3a" />
                      <path d="M1026 776H1017L1044 743L1054 776H1045L1034 817M1026 776L1015 824" fill="none" stroke="#3a8c3a" />
                      <path d="M1088 599L1092 607" stroke="#800080" stroke-width="7" />
                      <path d="M1089 592Q1093 592 1094 597M1085 610H1098" fill="none" stroke="#f0f" stroke-dasharray="4 2" />
                      <path d="M1112 552C1121 570 1123 590 1120 602C1118 608 1112 610 1106 609" fill="none" stroke="#3a3a3a" stroke-width="6" />
                      <path d="M1112 554C1120 572 1121 590 1119 601" fill="none" stroke="#555" stroke-width="2" />
                      <path d="M1094 610H1110" stroke="#bbb" stroke-width="5" />
                      <path d="M1110 553V606Q1108 617 1099 614" fill="none" stroke="#3a3a3a" stroke-width="5" />
                      <path d="M1109 556V606" stroke="#555" stroke-width="2" />
                      <circle cx="1110" cy="552" r="3" fill="#111" />
                      <ellipse cx="1109" cy="636" rx="23" ry="19" transform="rotate(-15 1109 636)" fill="none" stroke="#000" stroke-width="2" />
                      <ellipse cx="1109" cy="636" rx="15" ry="12" transform="rotate(-15 1109 636)" fill="#000" />
                      <path d="M1100 617L1106 631" stroke="#444" stroke-width="7" />
                      <circle cx="1099" cy="617" r="3" fill="#111" />
                      <ellipse cx="1023" cy="826" rx="10" ry="8" fill="#fff" stroke="#333" />
                      <path d="M1014 822Q1022 815 1032 820L1028 830Q1032 834 1024 833L1020 828L1014 830z" fill="#000" />
                      <path d="M1024 826L1032 822V828z" fill="#444" />
                    </svg>
                  </div>
                  <i class="vhandle"></i>
                </div>
                <div class="hstrip"><i></i></div>
                <div class="sheets">
                  <button v-for="(g, k) in navGlyphs" :key="k" class="nav" :aria-label="'Sheet step ' + (k + 1)"><svg viewBox="0 0 14 14"><path :d="g" /></svg></button>
                  <i class="gap"></i>
                  <button class="stab cur">*Model</button>
                  <button class="stab">Sheet 1</button>
                </div>
              </div>
            </div>
          </section>
        </div>
        <footer class="status">
          <span class="msg">Yaw the camera to the left.</span>
          <span>0 selected</span><span class="nil"></span><span class="nil"></span><span class="nil"></span>
          <span>ø 2 (2.0670)</span><span># Off</span><span>Foot</span>
        </footer>
      </div>

      <aside class="dock">
        <div v-for="(bar, bi) in dockBars" :key="bi" class="vbar">
          <div class="vbody">
            <i class="grip"></i>
            <template v-for="(it, k) in bar" :key="k">
              <i v-if="it.sep" class="hsep"></i>
              <button v-else :class="['tool', { on: it.on }]" :aria-label="it.t || it.i" :style="it.w ? { height: it.w + 'px' } : undefined">
                <svg v-if="it.i" class="ic" viewBox="0 0 32 32" v-html="icons[it.i]"></svg>
                <span v-else>{{ it.t }}</span>
              </button>
            </template>
          </div>
          <button class="more" aria-label="More buttons"><svg viewBox="0 0 16 12"><path d="M3 1V11" class="dash" /><path d="M9 1V11L14 6z" class="tri" /></svg></button>
        </div>
      </aside>
    </div>

    <div class="row">
      <div v-for="(bar, bi) in bottomBars" :key="bi" class="bar">
        <div class="body">
          <i class="grip"></i>
          <template v-for="(it, k) in bar" :key="k">
            <input v-if="it.field" class="field" type="text" aria-label="Distance" />
            <button v-else :class="['tool', { off: it.off, on: it.on, hot: it.hot, slim: it.i === 'go', pair: it.i && it.t }]" :disabled="it.off" :aria-label="it.t || it.i" :style="it.w ? { width: it.w + 'px' } : undefined">
              <svg v-if="it.i" class="ic" viewBox="0 0 32 32" v-html="icons[it.i]"></svg>
              <span v-if="it.t">{{ it.t }}</span>
            </button>
          </template>
        </div>
        <button class="more" aria-label="More buttons"><svg viewBox="0 0 12 16"><path d="M1 2H11" class="dash" /><path d="M1 8H11L6 14z" class="tri" /></svg></button>
      </div>
    </div>
  </div>
</template>

<style>
html,
body {
  background: #535353;
  overflow: hidden;
}
</style>

<style scoped>
.app {
  display: flex;
  flex-direction: column;
  height: 100vh;
  background: #535353;
  color: #000;
  font-family: "Open Sans", "Noto Sans", sans-serif;
  font-size: 11px;
  line-height: 16px;
}
button,
input {
  font: inherit;
  color: inherit;
  border: 0;
  padding: 0;
  margin: 0;
  background: none;
  white-space: nowrap;
}
h1,
h2 {
  margin: 0;
  font-size: 11px;
  font-weight: 400;
}
h1 {
  font-family: Lato, "Open Sans", sans-serif;
  font-size: 12px;
}
svg {
  display: block;
  flex: none;
}
.title {
  display: flex;
  align-items: center;
  height: 23px;
  flex: none;
  background: linear-gradient(90deg, #eff4fb, #f2f3f9);
}
.logo {
  width: 16px;
  height: 16px;
  margin: 0 6px 0 2px;
}
.wincontrols {
  display: flex;
  margin-left: auto;
  padding-right: 2px;
}
.wincontrols button {
  width: 46px;
  display: flex;
  justify-content: center;
}
.wincontrols svg {
  width: 12px;
  height: 12px;
  fill: none;
  stroke: #000;
}
.menu {
  display: flex;
  align-items: center;
  height: 23px;
  flex: none;
  color: #fff;
}
.docicon {
  width: 16px;
  height: 16px;
  margin: 0 2px;
}
.menus {
  display: flex;
  justify-content: space-between;
  width: 1072px;
  margin-left: 9px;
}
.mdi {
  display: flex;
  align-self: flex-end;
  margin-left: auto;
  padding: 0 2px 4px 0;
}
.mdi button {
  width: 16px;
  display: flex;
  justify-content: center;
}
.mdi svg {
  width: 10px;
  height: 10px;
  fill: none;
  stroke: #a5abb5;
  stroke-width: 2;
}
.mdi .thin {
  stroke-width: 1;
}
.row {
  display: flex;
  flex: none;
  height: 46px;
}
.bar {
  display: flex;
  height: 45px;
  background: linear-gradient(#a3a9b2, #7b828c 50%, #4b525d);
  border-radius: 2px 4px 0 0;
}
.body {
  display: flex;
  align-items: center;
  padding-right: 3px;
  background: linear-gradient(#cfd2d6, #c3c7cc 40%, #959ca6);
  border-radius: 2px 4px 3px 2px;
}
.grip {
  width: 3px;
  height: 27px;
  margin: 0 4px;
  background:
    repeating-linear-gradient(#444 0 2px, transparent 2px 4px) 0 0 / 2px 100% no-repeat,
    repeating-linear-gradient(transparent 0 1px, #fff 1px 3px, transparent 3px 4px) 1px 0 / 2px 100% no-repeat;
}
.tool {
  display: flex;
  align-items: center;
  justify-content: center;
  flex: none;
  width: 44px;
  height: 41px;
}
.tool.off {
  color: #878a8e;
}
.tool.pair {
  justify-content: flex-start;
  gap: 6px;
  padding-left: 6px;
}
.ic {
  width: 32px;
  height: 32px;
  shape-rendering: crispEdges;
  overflow: hidden;
}
.on {
  background: linear-gradient(#fbd8ae, #fdc48a 26%, #feaf51 28%, #fdb759 50%, #fdd97c 78%, #feea95);
  box-shadow: inset 0 0 0 1px #fbe3b5, inset -1px 0 0 1px #a9a79c;
}
.hot {
  background: linear-gradient(#fff6d6, #ffe59a 45%, #ffd04a 50%, #ffe48c);
  box-shadow: inset 0 0 0 1px #dcc78a;
}
.more {
  display: flex;
  align-items: flex-end;
  justify-content: center;
  width: 19px;
}
.more svg {
  width: 12px;
  height: 16px;
  fill: none;
  stroke: #fff;
  shape-rendering: crispEdges;
}
.more .dash {
  stroke-width: 2;
}
.more .tri {
  fill: #555;
  stroke-dasharray: 3 1;
}
.middle {
  display: flex;
  flex: 1;
  min-height: 0;
}
.main {
  display: flex;
  flex-direction: column;
  flex: 1;
  min-width: 0;
}
.work {
  display: flex;
  flex: 1;
  min-height: 0;
}
.side {
  display: flex;
  flex-direction: column;
  flex: none;
  width: 319px;
  margin-right: 4px;
}
.pane {
  display: flex;
  flex-direction: column;
  flex: 1;
  min-height: 0;
  border: 1px solid #f4f4f4;
  border-bottom: 1px solid #aaa;
}
.panehead {
  display: flex;
  align-items: center;
  height: 19px;
  flex: none;
  padding: 0 4px 0 3px;
  background: #a0a09f;
  color: #3f3f3f;
  gap: 8px;
}
.panehead h2 {
  flex: 1;
}
.panehead svg {
  width: 10px;
  height: 10px;
  fill: none;
  stroke: #444;
}
.panebar {
  display: flex;
  align-items: center;
  height: 44px;
  flex: none;
  margin: 3px 1px 0 2px;
  padding-left: 2px;
  overflow: hidden;
  background: linear-gradient(#cfd2d6, #c3c7cc 40%, #959ca6);
  box-shadow: 0 -3px 0 #ececec;
}
.vsep {
  flex: none;
  width: 1px;
  height: 26px;
  margin: 0 3px;
  background: #6d747e;
  border-right: 1px solid #f2f2f2;
}
.list {
  flex: 1;
  margin: 0 1px 0 2px;
  background: #fff;
}
table {
  width: 100%;
  table-layout: fixed;
  border-collapse: collapse;
}
.cname {
  width: 100px;
}
.cs {
  width: 20px;
}
.cel {
  width: 76px;
}
th {
  height: 18px;
  padding: 0 0 0 5px;
  text-align: left;
  font-weight: 400;
  background: linear-gradient(#fff, #ececee);
  border-right: 1px solid #c3c3c3;
  border-bottom: 1px solid #ddd;
}
th:last-child {
  border-right: 0;
}
td {
  height: 17px;
  padding: 0;
}
td.num {
  padding-left: 3px;
}
.lname {
  display: flex;
  height: 17px;
  font-size: 12px;
  white-space: nowrap;
  overflow: hidden;
}
.twig {
  width: 16px;
  height: 17px;
  margin-right: 1px;
}
.mark {
  width: 16px;
  height: 14px;
}
.swatch {
  display: block;
  width: 15px;
  height: 12px;
  margin: 0 0 0 1px;
  border: 1px solid #999;
}
.panetabs {
  display: flex;
  height: 22px;
  flex: none;
  padding-left: 4px;
  color: #fff;
}
.panetabs button {
  width: 27px;
  height: 20px;
  padding: 2px 0 0 4px;
  text-align: left;
}
.panetabs .sel {
  width: 24px;
  margin-right: 3px;
  padding-left: 3px;
  background: linear-gradient(#dfe2e8, #fff);
  border-radius: 0 0 4px 4px;
  color: #000;
  overflow: hidden;
}
.docs {
  display: flex;
  flex-direction: column;
  flex: 1;
  min-width: 0;
  margin-right: 1px;
  border-left: 1px solid #aaa;
}
.doctabs {
  display: flex;
  align-items: flex-end;
  height: 20px;
  flex: none;
  color: #fff;
}
.doctabs > button {
  padding: 0 7px;
  height: 18px;
}
.doctabs .active {
  display: flex;
  align-items: center;
  gap: 7px;
  height: 18px;
  margin-left: 3px;
  padding: 0 4px;
  color: #000;
  background: linear-gradient(#fff, #dfe3ea);
  border: 1px solid #c6e4ea;
  border-bottom: 0;
  border-radius: 4px 4px 0 0;
  box-sizing: border-box;
}
.active svg {
  width: 10px;
  height: 10px;
  fill: none;
  stroke: #444;
}
.scroll {
  width: 30px;
  height: 12px;
  margin: 0 4px 4px auto;
  fill: none;
  stroke: #444;
}
.frame {
  display: flex;
  flex: 1;
  min-height: 0;
  padding: 2px 6px 6px 3px;
  background: linear-gradient(#f4f4f4, #ececec);
}
.sheet {
  display: flex;
  flex-direction: column;
  flex: 1;
  min-width: 0;
  border: solid #7d7d7d;
  border-width: 4px 0 0 3px;
}
.view {
  display: flex;
  flex: 1;
  min-height: 0;
  background: #efefef;
}
.canvas {
  display: flex;
  align-items: center;
  justify-content: center;
  flex: 1;
  background: #fff;
}
.drawing {
  width: 240px;
  height: 570px;
  margin: 14px 19px 0 0;
}
.vhandle {
  align-self: center;
  width: 2px;
  height: 16px;
  margin: 26px 7px 0;
  background: #8b8b8b;
}
.hstrip {
  display: flex;
  align-items: center;
  justify-content: center;
  height: 16px;
  flex: none;
  background: #efefef;
  padding-right: 150px;
}
.hstrip i {
  width: 17px;
  height: 2px;
  background: #8b8b8b;
}
.sheets {
  display: flex;
  align-items: center;
  height: 18px;
  flex: none;
  background: linear-gradient(#4a4a4a, #6c6c6c 25%, #7d7d7d);
}
.nav {
  width: 14px;
  height: 14px;
  margin-right: 2px;
  background: #e8eaed;
}
.nav svg {
  width: 14px;
  height: 14px;
  fill: #444;
  stroke: #444;
}
.gap {
  width: 4px;
}
.stab {
  height: 18px;
  padding: 2px 15px 0 8px;
  margin-right: -11px;
  background: linear-gradient(#f4f5f7, #c6cbd3);
  clip-path: polygon(10px 0, 100% 0, calc(100% - 16px) 100%, 0 100%, 0 14px);
}
.stab.cur {
  padding-left: 6px;
  font-weight: 700;
  background: #fff;
  clip-path: polygon(0 0, 100% 0, calc(100% - 14px) 100%, 0 100%);
}
.status {
  display: flex;
  align-items: center;
  height: 20px;
  flex: none;
  padding: 0 1px 0 3px;
  color: #fff;
  background: linear-gradient(#454a58, #3d414d 40%, #2c2c2c 45%, #2f2f2f);
}
.status span {
  padding: 4px 2px 0 3px;
  border-left: 1px solid #6b6e74;
}
.status .msg {
  flex: 1;
  padding-left: 0;
  border: 0;
}
.status .nil {
  width: 0;
  height: 16px;
}
.dock {
  width: 47px;
  flex: none;
  padding-right: 1px;
}
.vbar {
  background: linear-gradient(90deg, #4b525d, #7b828c 50%, #a3a9b2);
  border-radius: 2px 2px 4px 2px;
}
.vbody {
  display: flex;
  flex-direction: column;
  align-items: center;
  padding-bottom: 3px;
  background: linear-gradient(90deg, #cfd2d6, #c3c7cc 40%, #959ca6);
  border-radius: 2px 2px 3px 3px;
}
.dock .grip {
  width: 31px;
  height: 3px;
  background:
    repeating-linear-gradient(90deg, #444 0 2px, transparent 2px 4px) 0 0 / 100% 2px no-repeat,
    repeating-linear-gradient(90deg, transparent 0 1px, #fff 1px 3px, transparent 3px 4px) 0 1px / 100% 2px no-repeat;
  margin: 4px 0;
}
.dock .tool {
  width: 42px;
  height: 42px;
}
.dock .tool span {
  writing-mode: vertical-rl;
  text-orientation: sideways;
  font-size: 12px;
}
.hsep {
  width: 28px;
  height: 1px;
  margin: 3px 0 2px;
  background: #5f6670;
  border-bottom: 1px solid #fff;
}
.dock .more {
  width: 100%;
  height: 20px;
  align-items: center;
  justify-content: flex-end;
  padding: 0 2px 0 0;
}
.dock .more svg {
  width: 16px;
  height: 12px;
}
.slim {
  width: 34px;
}
.field {
  width: 60px;
  height: 15px;
  margin: 0 2px 0 12px;
  background: #fff;
}
</style>
